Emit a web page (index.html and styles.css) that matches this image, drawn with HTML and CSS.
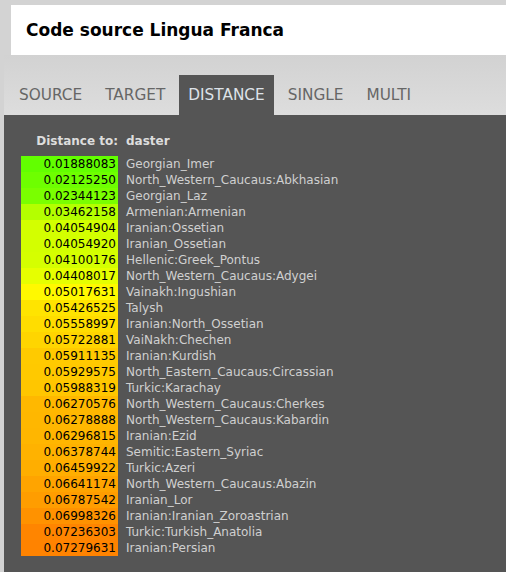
FILE: index.html
```html
<!DOCTYPE html>
<html>
<head>
<meta charset="utf-8">
<link rel="stylesheet" href="styles.css">
</head>
<body>
<div class="header"><h1 class="title">Code source Lingua Franca</h1></div>
<div class="tabbar">
  <div class="tab">SOURCE</div>
  <div class="tab">TARGET</div>
  <div class="tab active">DISTANCE</div>
  <div class="tab">SINGLE</div>
  <div class="tab">MULTI</div>
</div>
<div class="panel">
  <div class="dist">
    <div class="hd-l">Distance to:</div><div class="hd-r">daster</div>
    <div class="num" style="background:hsl(96.9,100%,50%)">0.01888083</div><div class="name">Georgian_Imer</div>
    <div class="num" style="background:hsl(94.0,100%,50%)">0.02125250</div><div class="name">North_Western_Caucaus:Abkhasian</div>
    <div class="num" style="background:hsl(91.3,100%,50%)">0.02344123</div><div class="name">Georgian_Laz</div>
    <div class="num" style="background:hsl(77.6,100%,50%)">0.03462158</div><div class="name">Armenian:Armenian</div>
    <div class="num" style="background:hsl(70.4,100%,50%)">0.04054904</div><div class="name">Iranian:Ossetian</div>
    <div class="num" style="background:hsl(70.4,100%,50%)">0.04054920</div><div class="name">Iranian_Ossetian</div>
    <div class="num" style="background:hsl(69.8,100%,50%)">0.04100176</div><div class="name">Hellenic:Greek_Pontus</div>
    <div class="num" style="background:hsl(66.0,100%,50%)">0.04408017</div><div class="name">North_Western_Caucaus:Adygei</div>
    <div class="num" style="background:hsl(58.6,100%,50%)">0.05017631</div><div class="name">Vainakh:Ingushian</div>
    <div class="num" style="background:hsl(53.6,100%,50%)">0.05426525</div><div class="name">Talysh</div>
    <div class="num" style="background:hsl(52.0,100%,50%)">0.05558997</div><div class="name">Iranian:North_Ossetian</div>
    <div class="num" style="background:hsl(50.0,100%,50%)">0.05722881</div><div class="name">VaiNakh:Chechen</div>
    <div class="num" style="background:hsl(47.6,100%,50%)">0.05911135</div><div class="name">Iranian:Kurdish</div>
    <div class="num" style="background:hsl(47.4,100%,50%)">0.05929575</div><div class="name">North_Eastern_Caucaus:Circassian</div>
    <div class="num" style="background:hsl(46.7,100%,50%)">0.05988319</div><div class="name">Turkic:Karachay</div>
    <div class="num" style="background:hsl(43.2,100%,50%)">0.06270576</div><div class="name">North_Western_Caucaus:Cherkes</div>
    <div class="num" style="background:hsl(43.1,100%,50%)">0.06278888</div><div class="name">North_Western_Caucaus:Kabardin</div>
    <div class="num" style="background:hsl(42.9,100%,50%)">0.06296815</div><div class="name">Iranian:Ezid</div>
    <div class="num" style="background:hsl(41.9,100%,50%)">0.06378744</div><div class="name">Semitic:Eastern_Syriac</div>
    <div class="num" style="background:hsl(40.9,100%,50%)">0.06459922</div><div class="name">Turkic:Azeri</div>
    <div class="num" style="background:hsl(38.7,100%,50%)">0.06641174</div><div class="name">North_Western_Caucaus:Abazin</div>
    <div class="num" style="background:hsl(36.9,100%,50%)">0.06787542</div><div class="name">Iranian_Lor</div>
    <div class="num" style="background:hsl(34.3,100%,50%)">0.06998326</div><div class="name">Iranian:Iranian_Zoroastrian</div>
    <div class="num" style="background:hsl(31.4,100%,50%)">0.07236303</div><div class="name">Turkic:Turkish_Anatolia</div>
    <div class="num" style="background:hsl(30.9,100%,50%)">0.07279631</div><div class="name">Iranian:Persian</div>
  </div>
</div>
</body>
</html>
```

FILE: styles.css
```css
html, body {
  margin: 0;
  padding: 0;
}
body {
  background: #d3d3d3;
  font-family: "DejaVu Sans", Verdana, sans-serif;
  height: 572px;
  overflow: hidden;
}
.header {
  margin: 5px 0 0 11px;
  height: 50px;
  background: #ffffff;
  display: flex;
  align-items: center;
  padding-left: 15px;
}
.title {
  margin: 0;
  font-size: 17px;
  font-weight: bold;
  color: #000;
}
.tabbar {
  margin-left: 4px;
  height: 60px;
  display: flex;
  align-items: flex-end;
  padding-left: 6px;
  background: linear-gradient(#d2d2d2, #dddddd);
}
.tab {
  height: 40px;
  line-height: 41px;
  padding: 0 9px;
  margin-right: 5px;
  font-size: 15.3px;
  color: #666666;
}
.tab.active {
  background: #555555;
  color: #dde2e8;
}
.panel {
  margin-left: 4px;
  background: #555555;
  height: 457px;
  padding: 18px 0 0 17px;
  box-sizing: border-box;
}
.dist {
  display: grid;
  grid-template-columns: 97px auto;
  grid-template-rows: 23px;
  grid-auto-rows: 16px;
  column-gap: 8px;
  font-size: 12px;
  line-height: 16px;
  justify-content: start;
}
.hd-l, .hd-r {
  font-weight: bold;
  color: #dddddd;
}
.hd-l {
  text-align: right;
}
.num {
  text-align: right;
  padding-right: 2px;
  color: #000;
}
.name {
  color: #d0d0d0;
  white-space: nowrap;
}
```
